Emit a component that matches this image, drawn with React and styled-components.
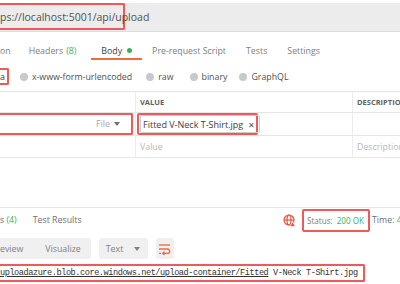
import React from "react";
import styled, { createGlobalStyle } from "styled-components";

const Global = createGlobalStyle`
  html, body {
    margin: 0;
    padding: 0;
    background: #ffffff;
  }
  body {
    font-family: "Open Sans", "Liberation Sans", sans-serif;
    color: #505050;
  }
`;

const Page = styled.div`
  width: 400px;
  height: 284px;
  overflow: hidden;
  display: flex;
  flex-direction: column;
  white-space: nowrap;
  font-size: 8.8px;
`;

const UrlBar = styled.div`
  margin-top: 3px;
  height: 28px;
  background: #ececec;
  border-bottom: 1px solid #dcdcdc;
  display: flex;
  align-items: stretch;
`;

const RedBox = styled.div`
  border: 2px solid #ee5a5a;
  border-left: ${p => (p.open ? "none" : "2px solid #ee5a5a")};
  border-radius: ${p => (p.open ? "0 2px 2px 0" : "2px")};
  display: flex;
  align-items: center;
  box-sizing: border-box;
`;

const UrlText = styled(RedBox)`
  width: 125px;
  height: 27px;
  font-size: 10.5px;
  color: #505050;
`;

const Tabs = styled.div`
  height: 28px;
  display: flex;
  align-items: stretch;
`;

const Tab = styled.div`
  padding: 11px 10px 0;
  margin-left: ${p => p.offset || 0}px;
  color: ${p => (p.active ? "#404040" : "#808080")};
  display: flex;
  align-items: center;
  gap: 3px;
  box-sizing: border-box;
  border-bottom: 2px solid ${p => (p.active ? "#f26b3a" : "transparent")};
`;

const Count = styled.span`
  color: #3fae5a;
`;

const Dot = styled.span`
  width: 5px;
  height: 5px;
  border-radius: 50%;
  background: #3fae5a;
  margin-left: 2px;
`;

const ModeRow = styled.div`
  height: 30px;
  padding-top: 3px;
  box-sizing: border-box;
  display: flex;
  align-items: center;
`;

const ModeFirst = styled(RedBox)`
  height: 17px;
  padding: 0 2px 0 0;
  margin-right: 11px;
  color: #404040;
`;

const Radio = styled.div`
  display: flex;
  align-items: center;
  color: #505050;
  margin-right: ${p => p.gap}px;
  &::before {
    content: "";
    width: 8px;
    height: 8px;
    border-radius: 50%;
    background: #c9c9c9;
    margin-right: 4px;
  }
`;

const Table = styled.div`
  margin-top: 1px;
  border-top: 1px solid #e6e6e6;
  display: grid;
  grid-template-columns: 136px 217px 1fr;
`;

const Cell = styled.div`
  height: ${p => p.h || 22}px;
  border-bottom: 1px solid #e6e6e6;
  border-right: ${p => (p.last ? "none" : "1px solid #ececec")};
  display: flex;
  align-items: center;
  box-sizing: border-box;
  padding: 0 ${p => (p.pad ? 4 : 1)}px;
  font-size: ${p => (p.head ? 7.5 : 8.8)}px;
  font-weight: ${p => (p.head ? 700 : 400)};
  color: ${p => (p.muted ? "#b8b8b8" : p.head ? "#606060" : "#505050")};
`;

const KeyCell = styled(Cell)`
  padding-left: 0;
`;

const KeyBox = styled(RedBox)`
  width: 133px;
  height: 22px;
  justify-content: flex-end;
  padding-right: 11px;
  color: #a9a9a9;
  gap: 4px;
`;

const Caret = styled.span`
  width: 0;
  height: 0;
  border-left: 3px solid transparent;
  border-right: 3px solid transparent;
  border-top: 4px solid ${p => p.color || "#707070"};
`;

const ValueBox = styled(RedBox)`
  width: 121px;
  height: 22px;
  padding-left: 1px;
`;

const Chip = styled.div`
  height: 16px;
  border: 1px solid #cfcfcf;
  border-radius: 2px;
  display: flex;
  align-items: center;
  padding: 0 4px 0 2px;
  gap: 5px;
  font-size: 9px;
  color: #404040;
`;

const Close = styled.span`
  font-size: 8px;
  color: #555555;
`;

const Spacer = styled.div`
  height: 49px;
`;

const ResponseBar = styled.div`
  border-top: 1px solid #e6e6e6;
  height: 24px;
  display: flex;
  align-items: center;
  color: #707070;
  & > * {
    flex-shrink: 0;
  }
`;

const ResTabs = styled.div`
  width: 283px;
  display: flex;
  gap: 16px;
`;

const StatusBox = styled(RedBox)`
  width: 68px;
  height: 23px;
  padding-left: 3px;
  gap: 4px;
  margin: 0 2px 0 6px;
  color: #808080;
  font-size: 8.1px;
`;

const Green = styled.span`
  color: #3fae5a;
`;

const Toolbar = styled.div`
  margin-top: 6px;
  height: 21px;
  display: flex;
  gap: 8px;
`;

const Segment = styled.div`
  background: #f0f0f0;
  border-radius: 0 3px 3px 0;
  display: flex;
  align-items: center;
  color: #808080;
  padding-right: 10px;
  gap: 22px;
`;

const Select = styled.div`
  background: #f0f0f0;
  border-radius: 3px;
  display: flex;
  align-items: center;
  color: #808080;
  padding: 0 10px 0 7px;
  gap: 11px;
  width: 49px;
  box-sizing: border-box;
`;

const IconBtn = styled.div`
  background: #f0f0f0;
  border-radius: 3px;
  width: 18px;
  display: flex;
  align-items: center;
  justify-content: center;
`;

const LinkBox = styled(RedBox)`
  margin-top: 5px;
  width: 365px;
  height: 18px;
  font-family: "Liberation Mono", "DejaVu Sans Mono", monospace;
  font-size: 8.6px;
  letter-spacing: -0.45px;
  color: #333333;
`;

const Link = styled.span`
  text-decoration: underline;
  text-underline-offset: 1px;
`;

const GlobeIcon = () => (
  <svg width="13" height="13" viewBox="0 0 13 13" fill="none" stroke="#e8553e" strokeWidth="1.2">
    <circle cx="6" cy="6" r="5" />
    <ellipse cx="6" cy="6" rx="2" ry="5" />
    <line x1="1" y1="6" x2="11" y2="6" />
    <path d="M9.5 8 L12.6 12.6 L6.4 12.6 Z" fill="#e8553e" stroke="#ffffff" strokeWidth="0.8" />
  </svg>
);

const WrapIcon = () => (
  <svg width="13" height="12" viewBox="0 0 13 12" fill="none" stroke="#f26b3a" strokeWidth="1.4">
    <line x1="1" y1="2" x2="12" y2="2" />
    <path d="M1 6 H9.5 A2.2 2.2 0 0 1 9.5 10.4 H5" />
    <path d="M6.5 8.6 L4.8 10.4 L6.5 12" />
    <line x1="1" y1="10.4" x2="3" y2="10.4" />
  </svg>
);

export default function App() {
  return (
    <Page>
      <Global />
      <UrlBar>
        <UrlText open>ps://localhost:5001/api/upload</UrlText>
      </UrlBar>
      <Tabs>
        <Tab offset={-10}>on</Tab>
        <Tab offset={-2}>
          Headers <Count>(8)</Count>
        </Tab>
        <Tab active offset={5}>
          Body <Dot />
        </Tab>
        <Tab>Pre-request Script</Tab>
        <Tab>Tests</Tab>
        <Tab>Settings</Tab>
      </Tabs>
      <ModeRow>
        <ModeFirst open>a</ModeFirst>
        <Radio gap={14}>x-www-form-urlencoded</Radio>
        <Radio gap={16}>raw</Radio>
        <Radio gap={12}>binary</Radio>
        <Radio gap={0}>GraphQL</Radio>
      </ModeRow>
      <Table>
        <Cell head h={21} />
        <Cell head pad h={21}>VALUE</Cell>
        <Cell head pad last h={21}>DESCRIPTION</Cell>
        <KeyCell h={23}>
          <KeyBox open>
            File <Caret />
          </KeyBox>
        </KeyCell>
        <Cell h={23}>
          <ValueBox>
            <Chip>
              Fitted V-Neck T-Shirt.jpg <Close>✕</Close>
            </Chip>
          </ValueBox>
        </Cell>
        <Cell last h={23} />
        <Cell />
        <Cell pad muted>Value</Cell>
        <Cell pad muted last>Description</Cell>
      </Table>
      <Spacer />
      <ResponseBar>
        <ResTabs>
          <span>
            s <Count>(4)</Count>
          </span>
          <span>Test Results</span>
        </ResTabs>
        <GlobeIcon />
        <StatusBox>
          Status: <Green>200 OK</Green>
        </StatusBox>
        <span>
          Time: <Green>435 ms</Green>
        </span>
      </ResponseBar>
      <Toolbar>
        <Segment>
          <span>eview</span>
          <span>Visualize</span>
        </Segment>
        <Select>
          Text <Caret color="#808080" />
        </Select>
        <IconBtn>
          <WrapIcon />
        </IconBtn>
      </Toolbar>
      <LinkBox open>
        <Link>uploadazure.blob.core.windows.net/upload-container/Fitted</Link>
        &nbsp;V-Neck T-Shirt.jpg
      </LinkBox>
    </Page>
  );
}
